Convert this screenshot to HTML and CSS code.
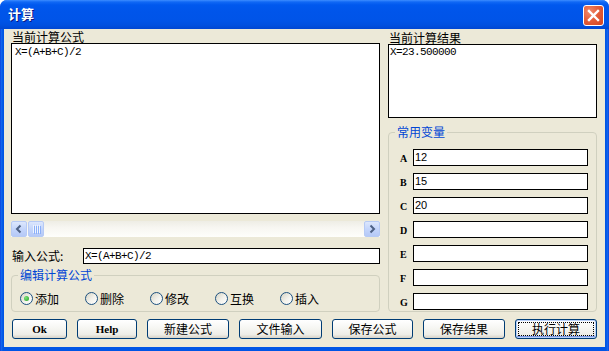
FILE: index.html
```html
<!DOCTYPE html>
<html>
<head>
<meta charset="utf-8">
<link rel="stylesheet" href="styles.css">
</head>
<body>
<div class="window">
  <div class="titlebar">
    <span class="title">计算</span>
    <div class="close">
      <svg width="13" height="13" viewBox="0 0 13 13"><path d="M2 2 L11 11 M11 2 L2 11" stroke="#fff" stroke-width="2.4" stroke-linecap="square"/></svg>
    </div>
  </div>
  <div class="client">
    <div class="main">
      <div class="left">
        <div class="label">当前计算公式</div>
        <div class="textarea mono">X=(A+B+C)/2</div>
        <div class="hscroll">
          <div class="sbtn"><svg width="14" height="14" viewBox="0 0 14 14"><path d="M8.5 3.5 L5 7 L8.5 10.5" fill="none" stroke="#4D6185" stroke-width="2"/></svg></div>
          <div class="thumb"><svg width="14" height="14" viewBox="0 0 14 14"><path d="M4.5 3 V11 M6.5 3 V11 M8.5 3 V11 M10.5 3 V11" stroke="#EEF4FE" stroke-width="1"/><path d="M5.5 4 V12 M7.5 4 V12 M9.5 4 V12 M11.5 4 V12" stroke="#8CB0F8" stroke-width="1"/></svg></div>
          <div class="track"></div>
          <div class="sbtn"><svg width="14" height="14" viewBox="0 0 14 14"><path d="M5.5 3.5 L9 7 L5.5 10.5" fill="none" stroke="#4D6185" stroke-width="2"/></svg></div>
        </div>
        <div class="input-row">
          <span class="row-label">输入公式:</span>
          <div class="field mono">X=(A+B+C)/2</div>
        </div>
        <fieldset class="group edit">
          <legend>编辑计算公式</legend>
          <div class="radios">
            <label class="radio-item"><span class="radio"><span class="dot"></span></span>添加</label>
            <label class="radio-item"><span class="radio"></span>删除</label>
            <label class="radio-item"><span class="radio"></span>修改</label>
            <label class="radio-item"><span class="radio"></span>互换</label>
            <label class="radio-item"><span class="radio"></span>插入</label>
          </div>
        </fieldset>
      </div>
      <div class="right">
        <div class="label label-r">当前计算结果</div>
        <div class="result mono">X=23.500000</div>
        <fieldset class="group vars">
          <legend>常用变量</legend>
          <div class="var"><span class="vname">A</span><div class="vfield">12</div></div>
          <div class="var"><span class="vname">B</span><div class="vfield">15</div></div>
          <div class="var"><span class="vname">C</span><div class="vfield">20</div></div>
          <div class="var"><span class="vname">D</span><div class="vfield"></div></div>
          <div class="var"><span class="vname">E</span><div class="vfield"></div></div>
          <div class="var"><span class="vname">F</span><div class="vfield"></div></div>
          <div class="var"><span class="vname">G</span><div class="vfield"></div></div>
        </fieldset>
      </div>
    </div>
    <div class="buttons">
      <div class="btn latin w55">Ok</div>
      <div class="btn latin w60">Help</div>
      <div class="btn w82">新建公式</div>
      <div class="btn w83">文件输入</div>
      <div class="btn w81">保存公式</div>
      <div class="btn w82">保存结果</div>
      <div class="btn w82 default"><span class="focus">执行计算</span></div>
    </div>
  </div>
</div>
</body>
</html>
```
FILE: styles.css
```css
* { box-sizing: border-box; }
body { margin: 0; background: #ffffff; }

.window {
  width: 609px;
  height: 351px;
  display: flex;
  flex-direction: column;
  border-radius: 7px 7px 0 0;
  overflow: hidden;
  background: linear-gradient(to right, #0831D9 0, #166AEE 1px, #0055E5 3px, #0055E5 calc(100% - 3px), #166AEE calc(100% - 1px), #0831D9 100%);
  font-family: "Noto Sans CJK SC", "Liberation Sans", sans-serif;
  font-size: 12px;
  color: #000;
}

.titlebar {
  height: 29px;
  flex: none;
  display: flex;
  align-items: center;
  justify-content: space-between;
  padding: 0 5px 0 8px;
  background: linear-gradient(#3D8DFF 0, #1068F5 2px, #0058EE 5px, #0055EA 12px, #0054E8 20px, #0050E0 25px, #0046D2 29px);
}

.title {
  color: #fff;
  font-weight: bold;
  font-size: 13px;
  line-height: 16px;
  text-shadow: 1px 1px 0 #0A1883;
  margin-top: -1px;
}

.close {
  width: 21px;
  height: 21px;
  margin-top: 1px;
  border: 1px solid #fff;
  border-radius: 3px;
  display: flex;
  align-items: center;
  justify-content: center;
  background: radial-gradient(circle at 30% 30%, #F08A6C 0, #E45F3C 45%, #D4431E 100%);
}

.client {
  flex: 1;
  margin: 0 4px 4px 4px;
  background: #ECE9D8;
  padding: 2px 8px 0 7px;
  display: flex;
  flex-direction: column;
}

.main { display: flex; gap: 8px; }
.left { width: 369px; display: flex; flex-direction: column; }
.right { width: 209px; display: flex; flex-direction: column; }

.label { line-height: 12px; height: 12px; padding-left: 1px; white-space: nowrap; }
.label-r { line-height: 13px; height: 13px; }

.mono {
  font-family: "Liberation Mono", monospace;
  font-size: 11px;
  letter-spacing: -0.6px;
}

.textarea {
  height: 171px;
  border: 1px solid #000;
  background: #fff;
  padding: 2px 3px;
  line-height: 13px;
}

.hscroll {
  margin-top: 7px;
  height: 16px;
  display: flex;
  background: linear-gradient(#EEEDE5, #F7F6F1 40%, #FEFEFB);
}
.sbtn, .thumb {
  width: 16px;
  height: 16px;
  border: 1px solid #B6CAF5;
  border-radius: 2px;
  background: linear-gradient(#DCE7FD, #C4D5FB 50%, #B5C9F7);
  display: flex;
  align-items: center;
  justify-content: center;
}
.thumb { margin-left: 1px; }
.track { flex: 1; }

.input-row {
  margin-top: 11px;
  display: flex;
  align-items: center;
  height: 16px;
}
.row-label { width: 72px; padding-left: 1px; line-height: 16px; }
.field {
  flex: 1;
  height: 16px;
  border: 1px solid #000;
  background: #fff;
  padding: 0 1px;
  line-height: 14px;
}

.group {
  margin: 0;
  border: 1px solid #D0D0BF;
  border-radius: 4px;
  min-width: 0;
}
.group legend {
  color: #0046D5;
  line-height: 14px;
  padding: 0 2px;
}

.edit {
  margin-top: 4px;
  padding: 10px 8px 6px 8px;
}
.edit legend { margin-left: -2px; }

.radios { display: flex; height: 13px; }
.radio-item {
  width: 65px;
  display: flex;
  align-items: center;
  gap: 2px;
  line-height: 13px;
  white-space: nowrap;
}
.radio {
  width: 13px;
  height: 13px;
  flex: none;
  border: 1px solid #1C5180;
  border-radius: 50%;
  background: linear-gradient(135deg, #D7D4C4 0, #F3F2EC 55%, #FFFFFF 100%);
  display: flex;
  align-items: center;
  justify-content: center;
}
.dot {
  width: 5px;
  height: 5px;
  border-radius: 50%;
  background: radial-gradient(circle at 35% 35%, #7FE27B, #21A121);
}

.result {
  height: 74px;
  border: 1px solid #000;
  background: #fff;
  padding: 1px 1px;
  line-height: 12px;
}

.vars {
  margin-top: 7px;
  padding: 10px 8px 1px 11px;
  display: flex;
  flex-direction: column;
  gap: 7px;
}
.vars legend { margin-left: -5px; }
.var { display: flex; align-items: center; height: 17px; }
.vname {
  width: 13px;
  font-family: "Liberation Serif", serif;
  font-weight: bold;
  font-size: 10px;
  line-height: 17px;
  padding-top: 2px;
}
.vfield {
  width: 175px;
  height: 17px;
  border: 1px solid #000;
  background: #fff;
  font-family: "Liberation Sans", sans-serif;
  font-size: 11px;
  line-height: 15px;
  padding: 0 1px;
}

.buttons {
  margin-top: 7px;
  margin-left: 1px;
  display: flex;
  gap: 10px;
}
.btn {
  height: 20px;
  border: 1px solid #003C74;
  border-radius: 3px;
  background: linear-gradient(#FFFFFF 0, #F7F7F4 40%, #EEEDE7 80%, #D8D3C8 100%);
  display: flex;
  align-items: center;
  justify-content: center;
  line-height: 14px;
  white-space: nowrap;
}
.latin {
  font-family: "Liberation Serif", serif;
  font-weight: bold;
  font-size: 11px;
}
.w55 { width: 55px; }
.w60 { width: 60px; }
.w81 { width: 81px; }
.w82 { width: 82px; }
.w83 { width: 83px; }
.default {
  padding: 2px;
  box-shadow: inset 0 0 0 1px #B9D1FA, inset 0 -1px 0 1px #7C98E6;
}
.focus {
  flex: 1;
  align-self: stretch;
  border: 1px dotted #000;
  display: flex;
  align-items: center;
  justify-content: center;
}
```
